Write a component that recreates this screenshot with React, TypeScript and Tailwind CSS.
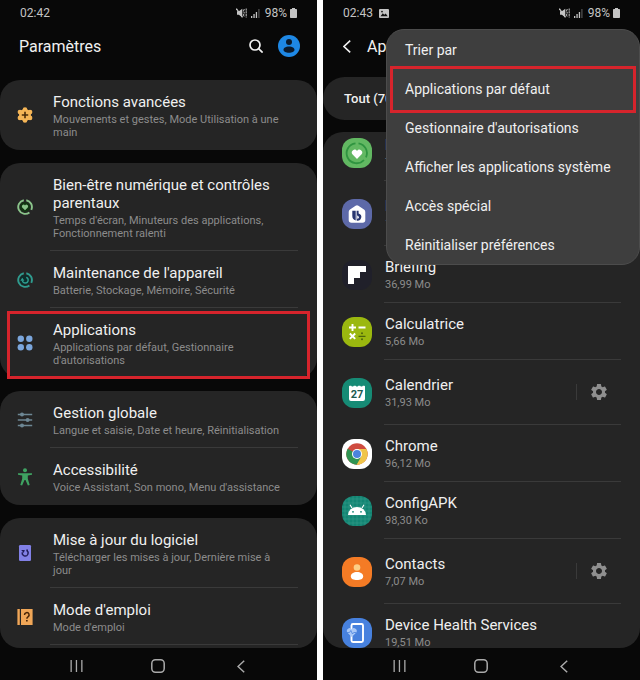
import { ReactNode } from 'react';
import { MdSettings } from 'react-icons/md';

type Setting = {
  title: string;
  subtitle: string;
  icon: ReactNode;
  marked?: boolean;
};

type AppEntry = {
  name: string;
  size: string;
  icon: ReactNode;
  configurable?: boolean;
};

const FeaturesIcon = () => (
  <svg viewBox="0 0 16 16" className="size-4">
    <g fill="#f5b556">
      <circle cx="8" cy="8" r="6" />
      <circle cx="8" cy="2.5" r="2.3" />
      <circle cx="8" cy="13.5" r="2.3" />
      <circle cx="3" cy="5.1" r="2.4" />
      <circle cx="13" cy="5.1" r="2.4" />
      <circle cx="3" cy="10.900" r="2.4" />
      <circle cx="13" cy="10.900" r="2.4" />
    </g>
    <path d="M8 4.800v6.400M4.800 8h6.400" stroke="#4a2c0a" strokeWidth="1.600" />
  </svg>
);

const WellbeingIcon = () => (
  <svg viewBox="0 0 16 16" className="size-4" fill="none">
    <circle cx="8" cy="8" r="5" fill="#123512" />
    <path d="M9.3 1.2A6.9 6.9 0 0 1 14.3 10.8M12.4 13.4A6.9 6.9 0 1 1 6.8 1.2" stroke="#8ac48a" strokeWidth="1.9" />
    <path d="M8 11.3 5.2 8.4a1.7 1.7 0 0 1 2.8-2 1.7 1.7 0 0 1 2.8 2z" fill="#8ac48a" />
  </svg>
);

const CareIcon = () => (
  <svg viewBox="0 0 16 16" className="size-4" fill="none">
    <circle cx="8" cy="8" r="5" fill="#0c2e2b" />
    <path d="M9.3 1.2A6.9 6.9 0 0 1 14.3 10.8M12.4 13.4A6.9 6.9 0 1 1 6.8 1.2" stroke="#2f9c8f" strokeWidth="1.9" />
    <path d="M9.200 5.400A2.900 2.900 0 1 1 5.400 8.500" stroke="#2f9c8f" strokeWidth="1.400" />
    <path d="M3.300 8.800 5.300 5.800 7.400 8.800z" fill="#2f9c8f" />
  </svg>
);

const AppsIcon = () => (
  <svg viewBox="0 0 16 16" className="size-4" fill="#7ba6dc">
    <circle cx="3.8" cy="3.8" r="3.2" />
    <circle cx="12.3" cy="3.8" r="3.2" />
    <circle cx="3.8" cy="12.2" r="3.2" />
    <circle cx="12.3" cy="12.2" r="3.2" />
  </svg>
);

const SlidersIcon = () => (
  <svg viewBox="0 0 16 16" className="size-4" fill="#6d8794">
    <path d="M.8 1.800h14.400v1.500H.8zM.8 7.300h14.400v1.500H.8zM.8 12.800h14.400v1.500H.8z" />
    <circle cx="5" cy="2.5" r="2" />
    <circle cx="10.6" cy="8" r="2" />
    <circle cx="5" cy="13.5" r="2" />
  </svg>
);

const AccessibilityIcon = () => (
  <svg viewBox="0 0 16 18" className="h-[18px] w-4" fill="#3fa362">
    <circle cx="8" cy="2.2" r="2" />
    <path d="M1 5.200h14v1.500l-4.200.8v3.200l1.900 6.200-1.800.7L8.500 12h-1l-2.400 5.600-1.800-.7 1.900-6.200V7.500L1 6.700z" />
  </svg>
);

const UpdateIcon = () => (
  <svg viewBox="0 0 16 16" className="size-4" fill="none">
    <rect x="2" y="0" width="12" height="16" rx="1.2" fill="#8180e6" />
    <path d="M9.300 5.300H11M9.800 5.700A2.900 2.900 0 1 1 5.400 7.300" stroke="#211c5a" strokeWidth="1.400" />
    <path d="M4.200 4.900h3.600L6.800 8z" fill="#211c5a" />
  </svg>
);

const ManualIcon = () => (
  <svg viewBox="0 0 16 16" className="size-4" fill="none">
    <path d="M.4 0h2.400v16H.4zM4 0h11.600v16H4z" fill="#f0a657" />
    <path d="M7.500 6a2.300 2.300 0 1 1 3.500 1.900c-.8.500-1.100.9-1.100 1.800" stroke="#4a2506" strokeWidth="1.500" />
    <path d="M9 10.900h1.700v1.700H9z" fill="#4a2506" />
  </svg>
);

const AppIcon = ({ className, children }: { className: string; children?: ReactNode }) => (
  <span className={`flex size-[30px] shrink-0 items-center justify-center overflow-hidden rounded-xl ${className}`}>
    <svg viewBox="0 0 30 30" className="size-full" fill="none">
      {children}
    </svg>
  </span>
);

const settingGroups: Setting[][] = [
  [
    {
      title: 'Fonctions avancées',
      subtitle: 'Mouvements et gestes, Mode Utilisation à une main',
      icon: <FeaturesIcon />,
    },
  ],
  [
    {
      title: 'Bien-être numérique et contrôles parentaux',
      subtitle: "Temps d'écran, Minuteurs des applications, Fonctionnement ralenti",
      icon: <WellbeingIcon />,
    },
    {
      title: "Maintenance de l'appareil",
      subtitle: 'Batterie, Stockage, Mémoire, Sécurité',
      icon: <CareIcon />,
    },
    {
      title: 'Applications',
      subtitle: "Applications par défaut, Gestionnaire d'autorisations",
      icon: <AppsIcon />,
      marked: true,
    },
  ],
  [
    {
      title: 'Gestion globale',
      subtitle: 'Langue et saisie, Date et heure, Réinitialisation',
      icon: <SlidersIcon />,
    },
    {
      title: 'Accessibilité',
      subtitle: "Voice Assistant, Son mono, Menu d'assistance",
      icon: <AccessibilityIcon />,
    },
  ],
  [
    {
      title: 'Mise à jour du logiciel',
      subtitle: 'Télécharger les mises à jour, Dernière mise à jour',
      icon: <UpdateIcon />,
    },
    {
      title: "Mode d'emploi",
      subtitle: "Mode d'emploi",
      icon: <ManualIcon />,
    },
  ],
];

const apps: AppEntry[] = [
  {
    name: 'Bien-être numérique',
    size: '7,52 Mo',
    icon: (
      <AppIcon className="bg-[#62b862]">
        <path d="M16.500 5.300A10 10 0 0 1 24 19.300M22 22A10 10 0 1 1 13.500 5.300" stroke="#2f9440" strokeWidth="1.800" />
        <path d="m15 21-4.600-4.700a2.800 2.800 0 0 1 4.600-3.400 2.800 2.800 0 0 1 4.600 3.400z" fill="#fff" />
      </AppIcon>
    ),
  },
  {
    name: 'Bixby Home',
    size: '14,20 Mo',
    icon: (
      <AppIcon className="bg-[#5d69a8]">
        <path d="M13.600 6.800q1.400-1 2.800 0l5.600 3.700q1.300.9 1.300 2.500v8q0 2.700-2.700 2.700H9.400q-2.700 0-2.700-2.700v-8q0-1.600 1.300-2.500z" fill="#fff" />
        <path d="M10.300 11.800h3.400v9.700a4.800 4.800 0 0 1-3.400-4.700z" fill="#28366f" />
        <path d="M14.600 11.800h2v2.700a3.600 3.600 0 1 1-2 7.100z" fill="#28366f" />
        <path d="M15.200 16.600a1.600 1.600 0 0 1 0 3.200z" fill="#fff" />
      </AppIcon>
    ),
    configurable: true,
  },
  {
    name: 'Briefing',
    size: '36,99 Mo',
    icon: (
      <AppIcon className="bg-[#20202a]">
        <path d="M6 6h18v6h-6v6h-6v6H6z" fill="#fff" />
      </AppIcon>
    ),
  },
  {
    name: 'Calculatrice',
    size: '5,66 Mo',
    icon: (
      <AppIcon className="bg-[#9bb80f]">
        <path d="M10.500 7v7M7 10.500h7M16.500 10.500h7M7.800 16.500l5.400 5.400M13.200 16.500l-5.400 5.400" stroke="#fff" strokeWidth="1.900" />
        <path d="M16.500 19.300h7" stroke="#4d660c" strokeWidth="1.200" />
        <circle cx="20" cy="16.300" r="1" fill="#4d660c" />
        <circle cx="20" cy="22.300" r="1" fill="#4d660c" />
      </AppIcon>
    ),
  },
  {
    name: 'Calendrier',
    size: '31,93 Mo',
    icon: (
      <AppIcon className="bg-[#168b75]">
        <path d="M7 8.500q0-.8.800-.8h1.400q1.300 1.700 2.600 0h1.900q1.300 1.700 2.600 0h1.900q1.300 1.700 2.600 0h1.400q.8 0 .8.800V21q0 2-2 2H9q-2 0-2-2z" fill="#fff" />
        <text x="15" y="20" textAnchor="middle" fontSize="11" fontWeight="700" fill="#1c5a50">
          27
        </text>
      </AppIcon>
    ),
    configurable: true,
  },
  {
    name: 'Chrome',
    size: '96,12 Mo',
    icon: (
      <AppIcon className="bg-white">
        <circle cx="15" cy="15" r="10.700" fill="#cf4b3f" />
        <path d="M15 15 5.730 9.650A10.700 10.700 0 0 0 15 25.700l4.630-8.030z" fill="#2f9453" />
        <path d="M15 10h9.400A10.700 10.700 0 0 1 14.600 25.700l4.730-8.200z" fill="#f0c54a" />
        <circle cx="15" cy="15" r="5" fill="#fff" />
        <circle cx="15" cy="15" r="4" fill="#4b83dd" />
      </AppIcon>
    ),
  },
  {
    name: 'ConfigAPK',
    size: '98,30 Ko',
    icon: (
      <AppIcon className="bg-[#128573]">
        <path
          d="M3 0v30M7 0v30M11 0v30M15 0v30M19 0v30M23 0v30M27 0v30M0 3h30M0 7h30M0 11h30M0 15h30M0 19h30M0 23h30M0 27h30"
          stroke="#389b8a"
          strokeWidth=".6"
        />
        <path d="M6 19a9 8 0 0 1 18 0z" fill="#fff" />
        <path d="m10 12-2-3.200M20 12l2-3.200" stroke="#fff" strokeWidth="1.100" />
        <circle cx="11" cy="15.800" r=".9" fill="#128573" />
        <circle cx="19" cy="15.800" r=".9" fill="#128573" />
      </AppIcon>
    ),
  },
  {
    name: 'Contacts',
    size: '7,07 Mo',
    icon: (
      <AppIcon className="bg-[#f47b25]">
        <circle cx="15" cy="10.500" r="3.300" fill="#fccf86" />
        <path d="M8.800 19.500c0-2.800 2.800-4.500 6.200-4.500s6.200 1.700 6.200 4.500c0 2.500-2.800 3.500-6.200 3.500s-6.200-1-6.200-3.500z" fill="#fff" />
      </AppIcon>
    ),
    configurable: true,
  },
  {
    name: 'Device Health Services',
    size: '19,51 Mo',
    icon: (
      <AppIcon className="bg-[#4781de]">
        <rect x="9.500" y="6" width="11.500" height="18" rx="1.500" stroke="#fff" strokeWidth="1.900" />
        <path d="m9.800 19-4.500-4.500a2.800 2.800 0 0 1 4.500-3.300 2.800 2.800 0 0 1 4.500 3.300z" fill="#a9c8f7" />
        <path d="M5 14.500h2.500l1.300-2 1.700 3.500 1.200-1.500H14" stroke="#4781de" strokeWidth=".8" />
      </AppIcon>
    ),
  },
];

const menuItems = [
  { label: 'Trier par' },
  { label: 'Applications par défaut', marked: true },
  { label: "Gestionnaire d'autorisations" },
  { label: 'Afficher les applications système' },
  { label: 'Accès spécial' },
  { label: 'Réinitialiser préférences' },
];

function StatusBar({ time, picture }: { time: string; picture?: boolean }) {
  return (
    <div className="flex h-6 shrink-0 items-center pt-0.5 pr-5 pl-5 text-xs text-[#c4c4c4]">
      <span>{time}</span>
      {picture && (
        <svg viewBox="0 0 10 9" className="ml-1.5 h-[9px] w-2.5">
          <path d="M1 0h8q1 0 1 1v7q0 1-1 1H1Q0 9 0 8V1q0-1 1-1z" fill="#c4c4c4" />
          <path d="M1.500 7.200 3.800 4.200l1.500 1.600 1.400-1.300 2 2.700z" fill="#111" />
          <circle cx="3" cy="2.600" r=".9" fill="#111" />
        </svg>
      )}
      <span className="ml-auto flex items-center">
        <svg viewBox="0 0 11 10" className="h-2.5 w-[11px]" fill="none">
          <path d="M1 3.200h1.800L6.300.8v8.400L2.800 6.800H1z" fill="#c4c4c4" />
          <path d="M.3.500 6.500 9.300" stroke="#c4c4c4" strokeWidth="1.300" />
          <path d="M8.300 1l-.8 2 .8 2-.8 2 .8 2M10.200.500V9.500" stroke="#c4c4c4" strokeWidth="1" strokeDasharray="2.200 .5" />
        </svg>
        <svg viewBox="0 0 9 9" className="ml-1 size-[9px]">
          <path d="M0 7h1.300v2H0zM2.400 5h1.300v4H2.400zM4.800 3h1.300v6H4.800z" fill="#c4c4c4" />
          <path d="M7.300 0h1.200v9H7.300z" fill="#555" />
        </svg>
        <span className="ml-[5px]">98%</span>
        <svg viewBox="0 0 7 10" className="ml-[3px] h-2.5 w-[7px]" fill="#c4c4c4">
          <path d="M2 0h3v1h1.200q.8 0 .8.800v7.400q0 .8-.8.800H.8Q0 10 0 9.200V1.800Q0 1 .8 1H2z" />
        </svg>
      </span>
    </div>
  );
}

function NavBar() {
  return (
    <nav className="grid h-8 shrink-0 grid-cols-3 px-[35px] pt-1">
      <button type="button" aria-label="Récents" className="flex items-center justify-center">
        <svg viewBox="0 0 13 12" className="h-3 w-[13px]" fill="#aaa">
          <path d="M.5 0h1.300v12H.5zM5.800 0h1.300v12H5.800zM11.200 0h1.300v12h-1.300z" />
        </svg>
      </button>
      <button type="button" aria-label="Accueil" className="flex items-center justify-center">
        <svg viewBox="0 0 14 14" className="size-3.5" fill="none">
          <rect x=".8" y=".8" width="12.400" height="12.400" rx="3.600" stroke="#aaa" strokeWidth="1.500" />
        </svg>
      </button>
      <button type="button" aria-label="Retour" className="flex items-center justify-center">
        <svg viewBox="0 0 8 13" className="h-[13px] w-2" fill="none">
          <path d="M7.200.7 1 6.500l6.200 5.800" stroke="#aaa" strokeWidth="1.500" />
        </svg>
      </button>
    </nav>
  );
}

function SettingRow({ setting, divider }: { setting: Setting; divider: boolean }) {
  return (
    <li className="relative">
      <a href="#" className="flex">
        <span className="flex w-[50px] shrink-0 items-center justify-center">{setting.icon}</span>
        <span
          className={`mr-[19px] block flex-1 border-b pt-[13px] pr-3 pb-2.5 pl-[3px] ${
            divider ? 'border-[#3a3a3a]' : 'border-transparent'
          }`}
        >
          <span className="block text-[15px] leading-[18px] text-[#f0f0f0]">{setting.title}</span>
          <span className="mt-0.5 block text-[11px] leading-[13px] text-[#8c8c8c]">{setting.subtitle}</span>
        </span>
      </a>
      {setting.marked && (
        <span className="pointer-events-none absolute inset-x-[7px] top-[3px] -bottom-px border-3 border-[#d6242c]" />
      )}
    </li>
  );
}

function SettingsScreen() {
  return (
    <section className="flex min-w-0 flex-1 flex-col overflow-hidden bg-[#080808]">
      <StatusBar time="02:42" />
      <header className="flex h-11 shrink-0 items-center pr-[17px] pl-[19px]">
        <h1 className="flex-1 pt-0.5 text-base text-[#f0f0f0]">Paramètres</h1>
        <button type="button" aria-label="Rechercher">
          <svg viewBox="0 0 14 14" className="size-3.5" fill="none" stroke="#f0f0f0" strokeWidth="1.700">
            <circle cx="6" cy="6" r="5" />
            <path d="m9.600 9.600 4 4" />
          </svg>
        </button>
        <button type="button" aria-label="Compte" className="ml-[15px]">
          <svg viewBox="0 0 22 22" className="size-[22px]">
            <circle cx="11" cy="11" r="11" fill="#1e88e5" />
            <circle cx="11" cy="7" r="3" fill="#0b1a2c" />
            <path d="M5.500 14.800c0-2 2.500-3.300 5.500-3.300s5.500 1.300 5.500 3.300c0 1.800-2.500 3-5.500 3s-5.500-1.200-5.500-3z" fill="#0b1a2c" />
          </svg>
        </button>
      </header>
      <div className="mt-3 flex min-h-0 flex-1 flex-col gap-[13px] overflow-hidden rounded-b-[20px]">
        {settingGroups.map((group, i) => {
          const last = i === settingGroups.length - 1;
          return (
            <ul key={i} className={`bg-[#252525] ${last ? 'flex-1 rounded-t-[20px]' : 'shrink-0 rounded-[20px]'}`}>
              {group.map((setting, j) => (
                <SettingRow key={setting.title} setting={setting} divider={last || j < group.length - 1} />
              ))}
            </ul>
          );
        })}
      </div>
      <NavBar />
    </section>
  );
}

function AppRow({ app }: { app: AppEntry }) {
  return (
    <li className="flex">
      <span className="flex w-[61px] shrink-0 items-center pl-[19px]">{app.icon}</span>
      <div
        className={`mr-[19px] flex flex-1 items-center border-b border-[#3a3a3a] pl-px ${
          app.configurable ? 'h-[65px]' : 'h-[57px]'
        }`}
      >
        <a href="#" className="flex-1">
          <span className="block text-[15px] leading-[18px] text-[#f0f0f0]">{app.name}</span>
          <span className="mt-0.5 block text-[11px] leading-[13px] text-[#8c8c8c]">{app.size}</span>
        </a>
        {app.configurable && (
          <button
            type="button"
            aria-label={`Réglages ${app.name}`}
            className="flex h-4 items-center border-l border-[#3a3a3a] pr-3 pl-3"
          >
            <MdSettings className="size-5 text-[#8f8f8f]" />
          </button>
        )}
      </div>
    </li>
  );
}

function AppsScreen() {
  return (
    <section className="relative flex min-w-0 flex-1 flex-col overflow-hidden bg-[#080808]">
      <StatusBar time="02:43" picture />
      <header className="flex h-11 shrink-0 items-center pl-5">
        <button type="button" aria-label="Retour">
          <svg viewBox="0 0 8 13" className="h-[13px] w-2" fill="none">
            <path d="M7.200.7 1 6.500l6.200 5.800" stroke="#f0f0f0" strokeWidth="1.600" />
          </svg>
        </button>
        <h1 className="ml-4 pt-0.5 text-base text-[#f0f0f0]">Applications</h1>
      </header>
      <button
        type="button"
        className="mt-[9px] flex h-[43px] shrink-0 items-center rounded-full bg-[#252525] pl-[21px] text-[13px] font-medium text-[#f0f0f0]"
      >
        Tout (70)
      </button>
      <div className="mt-3 min-h-0 flex-1 overflow-hidden rounded-[20px] bg-[#252525]">
        {/* list is scrolled a little past its top */}
        <ul className="-mt-2">
          {apps.map((app) => (
            <AppRow key={app.name} app={app} />
          ))}
        </ul>
      </div>
      <NavBar />

      <ul
        role="menu"
        className="absolute top-[29px] right-0 left-[63px] rounded-[18px] border border-[#4c4c4c] bg-[#3e3e3e]"
      >
        {menuItems.map((item) => (
          <li key={item.label} role="none" className="relative">
            <button
              type="button"
              role="menuitem"
              className="flex h-[39px] w-full items-center pl-[18px] text-sm whitespace-nowrap text-[#f0f0f0]"
            >
              {item.label}
            </button>
            {item.marked && (
              <span className="pointer-events-none absolute inset-x-[3px] -top-[3px] -bottom-[5px] border-3 border-[#d6242c]" />
            )}
          </li>
        ))}
      </ul>
    </section>
  );
}

export default function App() {
  return (
    <main className="flex h-screen gap-1.5 bg-white font-[Roboto,'Liberation_Sans',sans-serif]">
      <SettingsScreen />
      <AppsScreen />
    </main>
  );
}
